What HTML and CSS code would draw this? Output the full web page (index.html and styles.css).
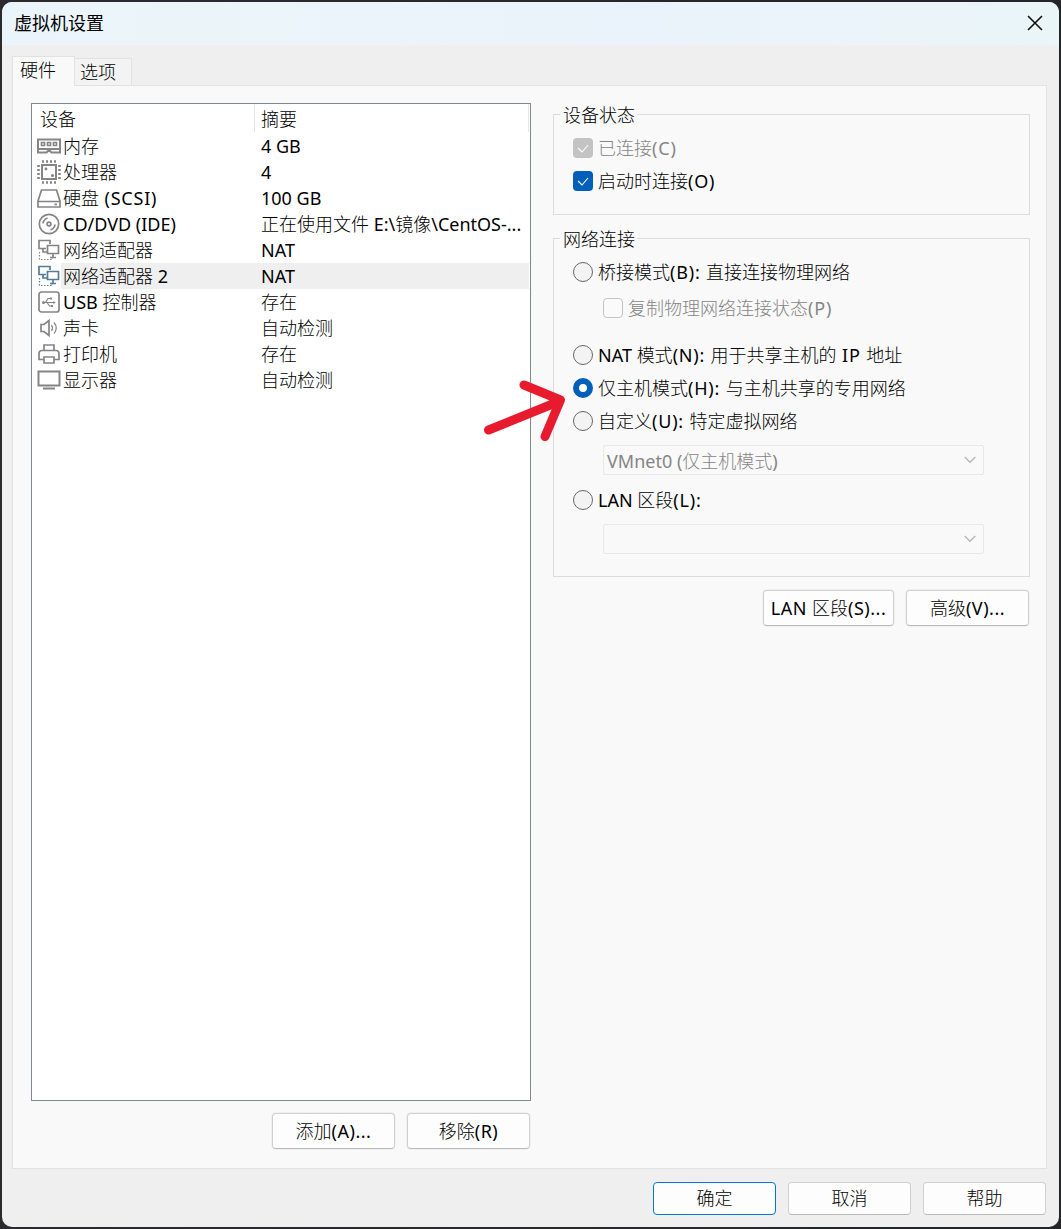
FILE: index.html
```html
<!DOCTYPE html>
<html lang="zh-CN">
<head>
<meta charset="utf-8">
<title>虚拟机设置</title>
<link rel="stylesheet" href="styles.css">
</head>
<body>
<div class="window">
  <header class="titlebar">
    <h1>虚拟机设置</h1>
    <svg class="close" width="16" height="16" viewBox="0 0 16 16"><path d="M1 1L15 15M15 1L1 15"/></svg>
  </header>
  <nav class="tabs">
    <span class="tab active">硬件</span>
    <span class="tab">选项</span>
  </nav>
  <main class="panel">
    <section class="left">
      <div class="list">
        <div class="head"><span class="c1">设备</span><span class="c2">摘要</span></div>
        <div class="row"><svg class="ico" viewBox="0 0 26 26"><path class="bold" d="M2 6.500H24V19.500H15.500L14 18H12L10.500 19.500H2ZM2 16H24"/><path d="M5.5 9.5H8.500V12.500H5.500ZM11.500 9.500H14.500V12.500H11.500ZM17.500 9.500H20.500V12.500H17.500Z"/></svg><span class="name">内存</span><span class="val"><b>4 GB</b></span></div>
        <div class="row"><svg class="ico" viewBox="0 0 26 26"><path class="bold" d="M6 6H20V20H6Z"/><path class="pins" d="M6 2.500H20M6 23.500H20M2.500 6V20M23.500 6V20"/><circle class="dot" cx="10" cy="10" r="1.400"/><circle class="dot" cx="16.500" cy="16.500" r="1.600"/></svg><span class="name">处理器</span><span class="val"><b>4</b></span></div>
        <div class="row"><svg class="ico" viewBox="0 0 26 26"><path d="M5.500 5H20.500L24 16V22H2V16ZM2 16.500H24M18.500 19.300H21"/></svg><span class="name">硬盘<b class="key"> (SCSI)</b></span><span class="val"><b>100 GB</b></span></div>
        <div class="row"><svg class="ico" viewBox="0 0 26 26"><circle cx="13" cy="13" r="9.700"/><circle cx="13" cy="13" r="1.900"/><path d="M7 12.500Q7.500 8.500 11.500 7M19 13.500Q18.500 17.500 14.500 19"/></svg><span class="name"><b>CD/DVD (IDE)</b></span><span class="val">正在使用文件<b> E:\</b>镜像<b>\CentOS-...</b></span></div>
        <div class="row"><svg class="ico" viewBox="0 0 26 26"><path d="M10 11.500H3V3.500H14V7M7 12V15H11M11.500 8.500H22.500V16.500H11.500ZM17 17V20M14 20.500H20"/><path class="thin" d="M3.500 15V22.500H16V20" stroke-dasharray="1.500 1.500"/></svg><span class="name">网络适配器</span><span class="val"><b>NAT</b></span></div>
        <div class="row selected"><svg class="ico" viewBox="0 0 26 26"><path d="M10 11.500H3V3.500H14V7M7 12V15H11M11.500 8.500H22.500V16.500H11.500ZM17 17V20M14 20.500H20"/><path class="thin" d="M3.500 15V22.500H16V20" stroke-dasharray="1.500 1.500"/></svg><span class="name">网络适配器<b> 2</b></span><span class="val"><b>NAT</b></span></div>
        <div class="row"><svg class="ico" viewBox="0 0 26 26"><rect x="3" y="3" width="20" height="20" rx="2.500"/><path class="thin" d="M7 13.500H18M9.500 13.500L12 9.500H14.500M11 13.500L13.500 17H16"/><path class="dot" d="M17.500 12L19.800 13.500L17.500 15ZM14 8.500H16V10.500H14ZM15 16H17V18H15Z"/><circle class="dot" cx="7.500" cy="13.500" r="1.500"/></svg><span class="name"><b>USB </b>控制器</span><span class="val">存在</span></div>
        <div class="row"><svg class="ico" viewBox="0 0 26 26"><path d="M5 9.500H8L13 5.500V20.500L8 16.500H5Z"/><path class="thin" d="M15.500 10Q17.500 13 15.500 16M18 7.500Q22.500 13 18 18.500"/></svg><span class="name">声卡</span><span class="val">自动检测</span></div>
        <div class="row"><svg class="ico" viewBox="0 0 26 26"><path d="M8 9V4H18V9M7.500 18.500H3V12.500Q3 9.500 6 9.500H20Q23 9.500 23 12.500V18.500H18.500M8 16H18V22H8Z"/></svg><span class="name">打印机</span><span class="val">存在</span></div>
        <div class="row"><svg class="ico" viewBox="0 0 26 26"><path class="bold" d="M2.500 4.500H23.500V18.500H2.500ZM7 21.500H19"/></svg><span class="name">显示器</span><span class="val">自动检测</span></div>
      </div>
      <div class="actions">
        <button>添加<b>(A)...</b></button>
        <button>移除<b>(R)</b></button>
      </div>
    </section>
    <section class="right">
      <div class="group status">
        <div class="legend">设备状态</div>
        <label class="option off"><i class="check on"><svg viewBox="0 0 20 20"><path d="M5 10L9 14L15 7"/></svg></i><span>已连接<b class="key">(C)</b></span></label>
        <label class="option"><i class="check on"><svg viewBox="0 0 20 20"><path d="M5 10L9 14L15 7"/></svg></i><span>启动时连接<b class="key">(O)</b></span></label>
      </div>
      <div class="group network">
        <div class="legend">网络连接</div>
        <label class="option"><i class="radio"></i><span>桥接模式<b class="key">(B): </b>直接连接物理网络</span></label>
        <label class="option off sub"><i class="check"></i><span>复制物理网络连接状态<b class="key">(P)</b></span></label>
        <label class="option nat"><i class="radio"></i><span><b>NAT </b>模式<b class="key">(N): </b>用于共享主机的<b class="key"> IP </b>地址</span></label>
        <label class="option"><i class="radio on"></i><span>仅主机模式<b class="key">(H): </b>与主机共享的专用网络</span></label>
        <label class="option"><i class="radio"></i><span>自定义<b class="key">(U): </b>特定虚拟网络</span></label>
        <div class="select"><span><b>VMnet0 (</b>仅主机模式<b>)</b></span><svg width="12" height="8" viewBox="0 0 12 8"><path d="M.7 1L6 6.300L11.300 1"/></svg></div>
        <label class="option lan"><i class="radio"></i><span><b>LAN </b>区段<b class="key">(L):</b></span></label>
        <div class="select"><span></span><svg width="12" height="8" viewBox="0 0 12 8"><path d="M.7 1L6 6.300L11.300 1"/></svg></div>
      </div>
      <div class="actions">
        <button class="wide"><b>LAN </b>区段<b>(S)...</b></button>
        <button>高级<b>(V)...</b></button>
      </div>
    </section>
  </main>
  <footer class="footer">
    <button class="primary">确定</button>
    <button>取消</button>
    <button>帮助</button>
  </footer>
  <svg class="arrow" width="90" height="70" viewBox="480 375 90 70"><path d="M488.500 430L560 401M524 385L560.500 400L545 436.500"/></svg>
</div>
</body>
</html>
```
FILE: styles.css
```css
* { box-sizing: border-box; }
body {
  margin: 0;
  padding: 2px;
  height: 1229px;
  background: linear-gradient(90deg, #2b2a2c, #242526);
  font: 300 18px/26px "Noto Sans CJK SC", sans-serif;
  color: #000;
  overflow: hidden;
}
b {
  font: 400 18px/1 "Noto Sans", sans-serif;
  white-space: pre;
}
b.key { letter-spacing: .8px; }
button b { letter-spacing: .5px; }
.window {
  position: relative;
  height: 1225px;
  display: flex;
  flex-direction: column;
  background: #efefef;
  border-radius: 10px;
  overflow: hidden;
}
.titlebar {
  height: 43px;
  flex: none;
  display: flex;
  justify-content: space-between;
  align-items: center;
  padding: 0 16px 2px 12px;
  background: linear-gradient(90deg, #eaf4fb, #ebf5f9 15%, #eaf3fb 60%, #eaf5f8);
}
.titlebar h1 { margin: 0 0 2px; font-size: 18px; font-weight: 400; }
.close { fill: none; stroke: #111; stroke-width: 1.6; }
.tabs {
  display: flex;
  flex: none;
  align-items: flex-end;
  height: 41px;
  padding-left: 10px;
  position: relative;
  z-index: 1;
  margin-bottom: -1px;
}
.tab {
  width: 57px;
  height: 28px;
  padding-left: 5px;
  border: 1px solid #e2e2e2;
  border-left: 0;
  background: #f3f3f3;
  line-height: 25px;
}
.tab.active {
  width: 63px;
  height: 30px;
  padding-left: 7px;
  border-left: 1px solid #e2e2e2;
  border-bottom: 0;
  background: #f9f9f9;
}
.panel {
  display: flex;
  justify-content: space-between;
  height: 1084px;
  flex: none;
  margin: 0 12px 0 10px;
  padding: 17px 16px 0 18px;
  border: 1px solid #e2e2e2;
  background: #f9f9f9;
}
.left { width: 500px; }
.list {
  height: 998px;
  border: 1px solid #828790;
  background: #fff;
  padding-right: 1px;
}
.head { display: flex; height: 29px; line-height: 28px; }
.head .c1 { width: 223px; padding-left: 8px; border-right: 1px solid #e3e3e3; height: 28px; }
.head .c2 { flex: 1; padding-left: 6px; border-right: 1px solid #e3e3e3; height: 28px; }
.row { display: flex; height: 26px; padding-left: 4px; line-height: 24px; }
.row.selected { background: linear-gradient(90deg, #fff 29px, #efefef 29px); }
.ico {
  width: 26px;
  height: 26px;
  flex: none;
  fill: none;
  stroke: #858585;
  stroke-width: 1.7;
}
.selected .ico { stroke: #557b96; }
.ico .thin { stroke-width: 1.2; }
.ico .bold { stroke-width: 2; }
.ico .pins { stroke-width: 2.6; stroke-dasharray: 2 2; }
.ico .dot { fill: #858585; stroke: none; }
.name { width: 199px; padding-left: 1px; white-space: nowrap; }
.val { white-space: nowrap; }
.actions { display: flex; justify-content: flex-end; gap: 12px; }
.left .actions { margin-top: 12px; padding-right: 1px; }
button {
  width: 123px;
  height: 36px;
  padding: 0 0 2px;
  border: 1px solid #d0d0d0;
  border-bottom-color: #b9b9b9;
  border-radius: 4px;
  background: #fdfdfd;
  color: #000;
  font: inherit;
  white-space: pre;
}
.panel button { box-shadow: 0 0 0 1px #f0f0f0; }
button.wide { width: 131px; }
.right { width: 477px; padding-top: 11px; }
.group { border: 1px solid #dcdcdc; padding-left: 19px; }
.status { height: 101px; }
.network { height: 339px; margin-top: 23px; }
.legend {
  width: 77px;
  height: 24px;
  margin: -12px 0 0 -13px;
  padding-left: 3px;
  line-height: 22px;
  background: #f9f9f9;
}
.option { display: flex; height: 20px; gap: 5px; line-height: 18px; margin-top: 13px; white-space: pre; }
.status .legend + .option, .network .legend + .option { margin-top: 11px; }
.option.off { color: #858585; }
.option.sub { margin: 16px 0 0 30px; }
.option.nat { margin-top: 27px; }
.option.lan { margin-top: 15px; }
.check, .radio { width: 20px; height: 20px; flex: none; border: 1px solid #666; background: #f3f3f3; }
.check { border-radius: 4px; }
.check.on { border: 0; background: #005fb8; }
.off .check { border-color: #c3c3c3; background: #fafafa; }
.off .check.on { background: #c3c3c3; }
.check svg { display: block; fill: none; stroke: #fff; stroke-width: 1.1; }
.radio { border-radius: 50%; }
.radio.on { border: 6px solid #005fb8; background: #fff; }
.select {
  display: flex;
  justify-content: space-between;
  align-items: center;
  width: 381px;
  height: 30px;
  margin: 14px 0 0 30px;
  padding: 0 7px 0 3px;
  border: 1px solid #e8e8e8;
  border-radius: 2px;
  color: #858585;
  line-height: 24px;
}
.select span { padding-bottom: 1px; }
.select svg { fill: none; stroke: #b5b5b5; stroke-width: 1.3; }
.right .actions { margin-top: 13px; padding-right: 1px; }
.footer { display: flex; justify-content: flex-end; gap: 12px; padding: 13px 13px 0 0; }
.footer button { height: 33px; padding-bottom: 3px; }
button.primary { border-color: #0078d4; }
.arrow {
  position: absolute;
  left: 478px;
  top: 373px;
  fill: none;
  stroke: #e81b2e;
  stroke-width: 9;
  stroke-linecap: round;
  stroke-linejoin: round;
}
```
